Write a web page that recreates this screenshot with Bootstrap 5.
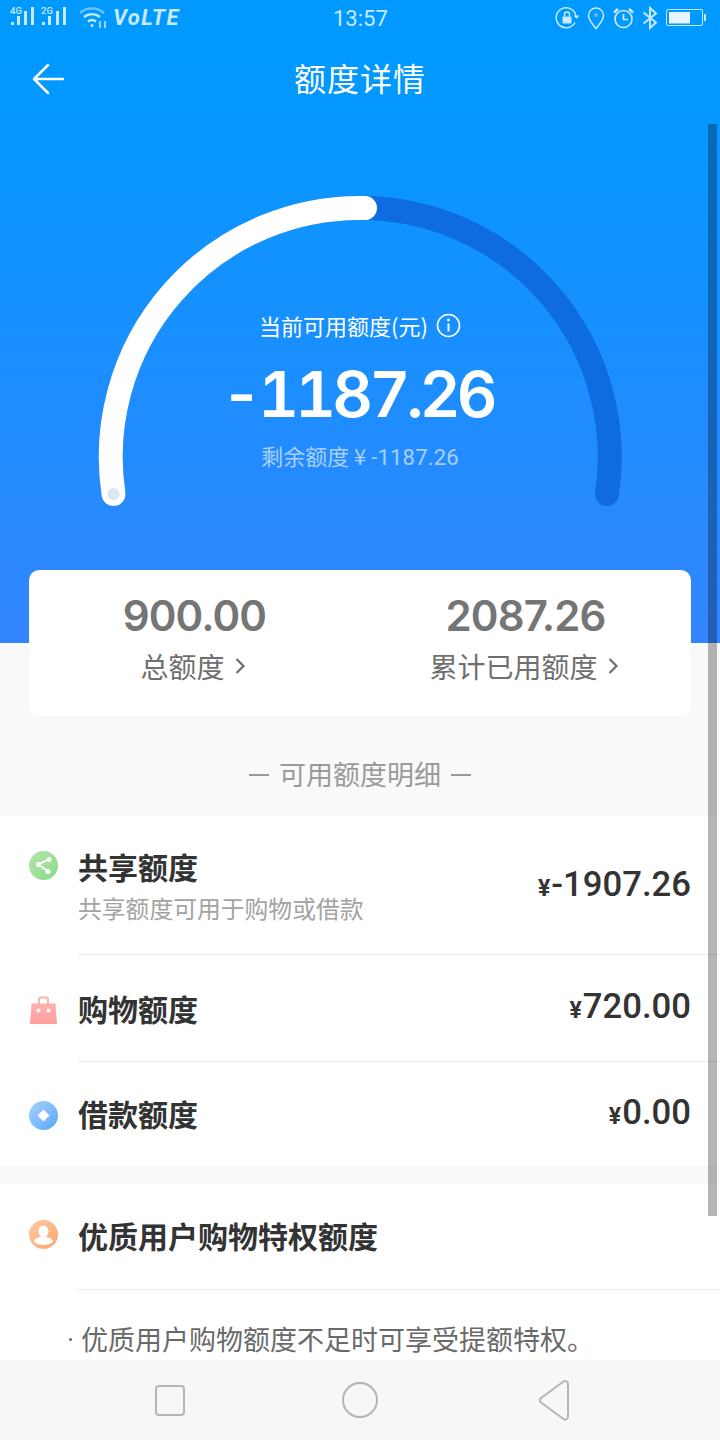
<!DOCTYPE html>
<html lang="zh">
<head>
<meta charset="utf-8">
<title>额度详情</title>
<link rel="stylesheet" href="https://cdn.jsdelivr.net/npm/bootstrap@5.3.0/dist/css/bootstrap.min.css">
<style>
html,body{margin:0;background:#f9f9f9}
body{font-family:"Noto Sans CJK SC","Noto Sans",sans-serif}
.phone{width:720px;height:1440px;overflow:hidden;position:relative;background:#f9f9f9}
.scroller{position:absolute;left:708px;top:124px;width:9px;height:1092px;background:rgba(0,0,0,.29);z-index:5}
.hero{height:643px;background:linear-gradient(180deg,#0099ff 0,#0099ff 60px,#3385ff 100%);color:#fff}
.statusbar{height:36px;padding:0 13px 0 10px;color:#c8e9ff}
.clock{font-family:Roboto,sans-serif;font-size:22px;position:absolute;left:333px;top:5px;line-height:28px}
.volte{font-family:Roboto,sans-serif;font-style:italic;font-weight:700;font-size:22px;line-height:28px;letter-spacing:1.4px;margin-left:5px}
.topbar{height:84px;position:relative}
.backarrow{position:absolute;left:32px;top:27px}
.page-title{font-size:32px;line-height:40px;letter-spacing:1px;font-weight:400;margin:-2px 0 0}
.gauge{position:relative;height:523px}
.gauge-arc{position:absolute;left:0;top:0}
.gauge-text{position:absolute;left:0;right:0;top:188px}
.gauge-label{font-size:22px;line-height:34px;gap:8px;height:34px}
.gauge-num{font-family:Inter,sans-serif;font-weight:600;font-size:63px;line-height:72px;margin-top:16px;padding-right:5px;font-variant-numeric:tabular-nums;letter-spacing:-3.700px}
.gauge-sub{font-size:22px;line-height:30px;color:#a9d0ff;margin-top:10px}
.gauge-sub b{font-family:Roboto,sans-serif;font-weight:400;letter-spacing:.2px}
.limit-card{margin:-73px 29px 0;height:146px;background:#fff;border-radius:10px;position:relative;color:#767676}
.limit-col{width:50%;text-align:center}
.limit-num{font-family:Inter,sans-serif;font-weight:600;font-size:42px;line-height:50px;margin-top:21px;color:#757575;letter-spacing:-.9px}
.limit-label{font-size:28px;line-height:40px;margin-top:5px;gap:9px;color:#6f6f6f;padding-right:3px}
.sec-title{height:99px;color:#9a9a9a;font-size:27px;gap:10px;padding-top:18px}
.dash{width:20px;height:2px;background:#9a9a9a}
.panel{background:#fff}
.rowline{position:relative;padding-left:78px}
.rowline .ico{position:absolute}
.ico-left{left:29px}
.row1{height:140px}
.row2{height:107px}
.row3{height:103px}
.divide{border-bottom:1px solid #ececec}
.rowbody{height:100%;padding-right:29px}
.r-name{font-size:30px;font-weight:700;color:#333;line-height:40px}
.r-sub{font-size:23.8px;color:#a3a3a3;line-height:34px;margin-top:5px}
.r-amt{font-family:Roboto,sans-serif;font-weight:500;font-size:34.700px;color:#333;line-height:44px;white-space:nowrap}
.r-amt i{font-style:normal;font-size:23px;font-weight:700;margin-right:1px}
.panel2{margin-top:19px;height:176px;overflow:hidden}
.p2-head{height:106px;margin-left:78px;padding-bottom:3px}
.p2-text{font-size:27px;color:#696969;line-height:40px;padding:29px 0 0 69px;white-space:nowrap;gap:9px}
.dot-mark{width:3px;height:3px;background:#696969;border-radius:50%;align-self:center}
.navbar-sys{height:80px;background:#f7f7f7;position:absolute;left:0;right:0;top:1360px}
.nav-art{position:absolute;left:0;top:0}
.abs-ico{position:absolute;left:29px;top:36px}
</style>
</head>
<body>
<div class="phone">
  <div class="scroller"></div>

  <div class="hero">
    <div class="statusbar d-flex align-items-center position-relative">
      <svg width="60" height="28" viewBox="0 0 60 28" fill="#c8e9ff">
        <text x="0" y="10" font-family="Roboto,sans-serif" font-size="9.5" font-weight="500">4G</text>
        <rect x="1" y="18" width="3" height="3"/><rect x="7" y="12" width="3" height="9"/><rect x="14" y="7" width="3" height="14"/><rect x="21" y="3" width="3" height="18"/>
        <text x="31" y="10" font-family="Roboto,sans-serif" font-size="9.5" font-weight="500">2G</text>
        <rect x="32" y="18" width="3" height="3"/><rect x="38" y="12" width="3" height="9"/><rect x="46" y="7" width="3" height="14"/><rect x="53" y="3" width="3" height="18"/>
      </svg>
      <svg class="ms-2" width="30" height="26" viewBox="0 0 30 26" fill="none" stroke="#c8e9ff" stroke-width="2.4">
        <path d="M2 8a18 18 0 0 1 24 0" opacity=".55"/><path d="M6 12a12.500 12.500 0 0 1 16 0"/><path d="M10 16.500a6.500 6.500 0 0 1 8 0"/>
        <circle cx="14" cy="20.500" r="1.500" fill="#c8e9ff" stroke="none"/>
        <path d="M22 23v-7M27 16v7" stroke-width="1.500"/>
      </svg>
      <span class="volte">VoLTE</span>
      <span class="clock">13:57</span>
      <div class="ms-auto d-flex align-items-center" style="gap:8px">
        <svg width="24" height="24" viewBox="0 0 24 24" fill="none" stroke="#c8e9ff" stroke-width="1.500">
          <path d="M20 16.500A10 10 0 1 1 21 10"/><path d="M18.500 9.500h6l-3 3.200z" fill="#c8e9ff" stroke="none"/>
          <rect x="7.500" y="10.500" width="9" height="7" rx="1" fill="#c8e9ff" stroke="none"/><path d="M9.500 10.500V8.500a2.500 2.500 0 0 1 5 0v2"/>
        </svg>
        <svg width="18" height="24" viewBox="0 0 18 24" fill="none" stroke="#c8e9ff" stroke-width="1.600">
          <path d="M9 22.500C5 17.500 1.500 14 1.500 9.500a7.500 7.500 0 0 1 15 0C16.500 14 13 17.500 9 22.500z"/><circle cx="9" cy="9" r="2" fill="#5fb9ff" stroke="none"/>
        </svg>
        <svg width="21" height="22" viewBox="0 0 21 22" fill="none" stroke="#c8e9ff" stroke-width="1.700">
          <circle cx="10.500" cy="12" r="8.500"/><path d="M10.500 7v5.500h4.500"/><path d="M1 5.500 5 2M20 5.500 16 2" stroke-width="2.600"/>
        </svg>
        <svg width="16" height="24" viewBox="0 0 16 24" fill="none" stroke="#c8e9ff" stroke-width="2">
          <path d="M1.500 6.500 14 16.500 8 22V2l6 5.500L1.500 17.500"/>
        </svg>
        <svg width="41" height="18" viewBox="0 0 41 18" fill="none">
          <rect x=".5" y=".5" width="36" height="16" rx="1.500" stroke="#c8e9ff"/><rect x="3" y="3" width="21" height="11.500" fill="#e6f5ff"/><rect x="38" y="5" width="2" height="7" fill="#c8e9ff"/>
        </svg>
      </div>
    </div>

    <div class="topbar d-flex align-items-center justify-content-center">
      <svg class="backarrow" width="33" height="32" viewBox="0 0 33 32" fill="none" stroke="#fff" stroke-width="2.500" stroke-linecap="round" stroke-linejoin="round">
        <path d="M31 16H2M16 2 2 16l14 14"/>
      </svg>
      <h1 class="page-title">额度详情</h1>
    </div>

    <div class="gauge">
      <svg class="gauge-arc" width="720" height="400" viewBox="0 120 720 400" fill="none" stroke-linecap="round" stroke-width="24">
        <path d="M113.500 494A249 249 0 0 1 360 208A249 249 0 0 1 607 494" stroke="#0e6be0"/>
        <path d="M113.500 494A249 249 0 0 1 365 208" stroke="#fff"/>
        <circle cx="113.500" cy="494" r="6" fill="#dbe6f2" stroke="none"/>
      </svg>
      <div class="gauge-text text-center">
        <div class="gauge-label d-flex justify-content-center align-items-center">
          <span>当前可用额度(元)</span>
          <svg width="25" height="25" viewBox="0 0 25 25" fill="none" stroke="#fff" stroke-width="1.600">
            <circle cx="12.500" cy="12.500" r="11"/><path d="M12.500 10.500v8" stroke-width="2"/><circle cx="12.500" cy="7" r="1.400" fill="#fff" stroke="none"/>
          </svg>
        </div>
        <div class="gauge-num">-1187.26</div>
        <div class="gauge-sub">剩余额度 ¥ <b>-1187.26</b></div>
      </div>
    </div>
  </div>

  <div class="limit-card d-flex">
    <div class="limit-col">
      <div class="limit-num">900.00</div>
      <div class="limit-label d-flex justify-content-center align-items-center">总额度
        <svg width="12" height="20" viewBox="0 0 12 20" fill="none" stroke="#6f6f6f" stroke-width="2.200"><path d="M2.500 3l7 7-7 7"/></svg>
      </div>
    </div>
    <div class="limit-col">
      <div class="limit-num">2087.26</div>
      <div class="limit-label d-flex justify-content-center align-items-center">累计已用额度
        <svg width="12" height="20" viewBox="0 0 12 20" fill="none" stroke="#6f6f6f" stroke-width="2.200"><path d="M2.500 3l7 7-7 7"/></svg>
      </div>
    </div>
  </div>

  <div class="sec-title d-flex align-items-center justify-content-center">
    <span class="dash"></span><span>可用额度明细</span><span class="dash"></span>
  </div>

  <div class="panel">
    <div class="rowline row1">
      <svg class="ico ico-left" style="top:36px" width="29" height="29" viewBox="0 0 29 29">
        <defs><linearGradient id="gr" x1="0" y1="0" x2="1" y2="1"><stop offset="0" stop-color="#b9e3ad"/><stop offset="1" stop-color="#84dc85"/></linearGradient></defs>
        <circle cx="14.500" cy="14.500" r="14.500" fill="url(#gr)"/>
        <path d="M20 8 9.500 13.500 19 20.500" stroke="#fff" stroke-width="1.800" fill="none"/>
        <circle cx="20" cy="8.500" r="2.500" fill="#fff"/><circle cx="9.500" cy="13.500" r="2.500" fill="#fff"/><circle cx="19" cy="20.500" r="2.500" fill="#fff"/>
      </svg>
      <div class="rowbody divide d-flex justify-content-between">
        <div style="padding-top:31px">
          <div class="r-name">共享额度</div>
          <div class="r-sub">共享额度可用于购物或借款</div>
        </div>
        <div class="r-amt" style="padding-top:47px"><i>¥</i>-1907.26</div>
      </div>
    </div>
    <div class="rowline row2">
      <svg class="ico ico-left" style="top:41px" width="29" height="29" viewBox="0 0 29 29">
        <defs><linearGradient id="rd" x1="0" y1="0" x2="0" y2="1"><stop offset="0" stop-color="#ffb0b0"/><stop offset="1" stop-color="#ff9f9f"/></linearGradient></defs>
        <path d="M2.500 7.500h24l1.500 20.500H1z" fill="url(#rd)"/>
        <path d="M10 8V3.500a2 2 0 0 1 2-2h5a2 2 0 0 1 2 2V8" fill="none" stroke="#ffb0b0" stroke-width="2"/>
        <circle cx="9.500" cy="14.500" r="2" fill="#fff"/><circle cx="19.500" cy="14.500" r="2" fill="#fff"/>
      </svg>
      <div class="rowbody divide d-flex justify-content-between">
        <div class="r-name" style="padding-top:33px">购物额度</div>
        <div class="r-amt" style="padding-top:29px"><i>¥</i>720.00</div>
      </div>
    </div>
    <div class="rowline row3">
      <svg class="ico ico-left" style="top:39px" width="29" height="29" viewBox="0 0 29 29">
        <defs><linearGradient id="bl" x1="0" y1="0" x2="1" y2="1"><stop offset="0" stop-color="#a9d4fb"/><stop offset="1" stop-color="#57a5fb"/></linearGradient></defs>
        <circle cx="14.500" cy="14.500" r="14.500" fill="url(#bl)"/>
        <path d="M14.500 8.500l6 6-6 6-6-6z" fill="#fff"/>
      </svg>
      <div class="rowbody d-flex justify-content-between">
        <div class="r-name" style="padding-top:31px">借款额度</div>
        <div class="r-amt" style="padding-top:28px"><i>¥</i>0.00</div>
      </div>
    </div>
  </div>

  <div class="panel panel2 position-relative">
    <svg class="abs-ico" width="29" height="29" viewBox="0 0 29 29">
      <defs><linearGradient id="or" x1="0" y1="0" x2="1" y2="1"><stop offset="0" stop-color="#fdc9a3"/><stop offset="1" stop-color="#fda76c"/></linearGradient></defs>
      <circle cx="14.500" cy="14.500" r="14.500" fill="url(#or)"/>
      <ellipse cx="14.500" cy="11.500" rx="5" ry="6" fill="#fff"/>
      <path d="M5 22c0-3.500 4-5 9.500-5s9.500 1.500 9.500 5c-2.500 2-6 3-9.500 3S7.500 24 5 22z" fill="#fff"/>
    </svg>
    <div class="p2-head divide d-flex align-items-center"><div class="r-name">优质用户购物特权额度</div></div>
    <div class="p2-text d-flex"><span class="dot-mark"></span><span>优质用户购物额度不足时可享受提额特权。</span></div>
  </div>

  <div class="navbar-sys">
    <svg class="nav-art" width="720" height="80" viewBox="0 0 720 80" fill="none" stroke="#b5b5b5" stroke-width="2">
      <rect x="156" y="26" width="28" height="29" rx="3"/>
      <circle cx="360" cy="40" r="17"/>
      <path d="M568 24a3 3 0 0 0-4.500-2.500L541 38a3 3 0 0 0 0 4.500l22.500 16.500a3 3 0 0 0 4.500-2.500z" stroke-linejoin="round"/>
    </svg>
  </div>
</div>
<script src="https://cdn.jsdelivr.net/npm/bootstrap@5.3.0/dist/js/bootstrap.bundle.min.js"></script>
</body>
</html>
